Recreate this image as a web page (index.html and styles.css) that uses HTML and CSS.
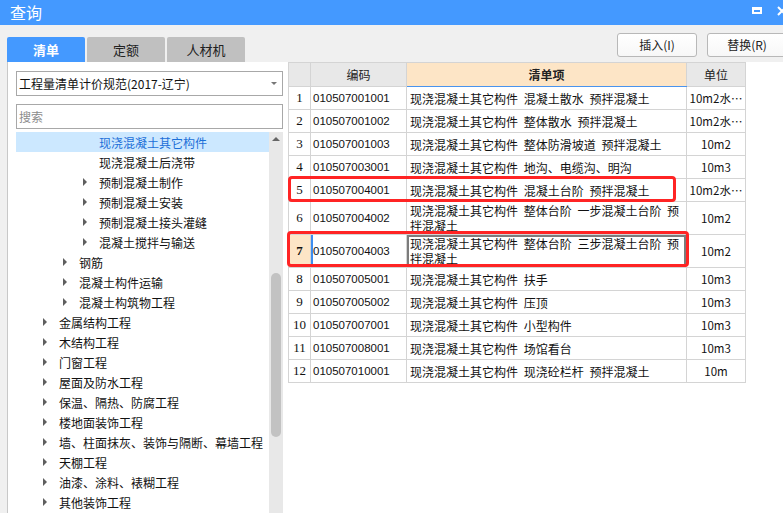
FILE: index.html
```html
<!DOCTYPE html>
<html lang="zh-CN">
<head>
<meta charset="utf-8">
<title>查询</title>
<link rel="stylesheet" href="styles.css">
</head>
<body>
<div class="titlebar">
  <span class="title">查询</span>
  <span class="winbtns">
    <span class="max"></span>
    <svg class="close" width="10" height="10" viewBox="0 0 10 10"><path d="M1 1L9 9M9 1L1 9" stroke="#fff" stroke-width="2"/></svg>
  </span>
</div>
<div class="toolbar">
  <div class="tabs">
    <div class="tab active">清单</div>
    <div class="tab">定额</div>
    <div class="tab">人材机</div>
  </div>
  <div class="actions">
    <div class="btn">插入(I)</div>
    <div class="btn">替换(R)</div>
  </div>
</div>
<div class="main">
  <div class="left">
    <div class="select">工程量清单计价规范(2017-辽宁)<span class="caret"></span></div>
    <div class="search">搜索</div>
    <div class="treewrap">
      <div class="tree">
        <div class="row l3 sel"><span class="noarrow"></span>现浇混凝土其它构件</div>
        <div class="row l3"><span class="noarrow"></span>现浇混凝土后浇带</div>
        <div class="row l3"><span class="arrow"></span>预制混凝土制作</div>
        <div class="row l3"><span class="arrow"></span>预制混凝土安装</div>
        <div class="row l3"><span class="arrow"></span>预制混凝土接头灌缝</div>
        <div class="row l3"><span class="arrow"></span>混凝土搅拌与输送</div>
        <div class="row l2"><span class="arrow"></span>钢筋</div>
        <div class="row l2"><span class="arrow"></span>混凝土构件运输</div>
        <div class="row l2"><span class="arrow"></span>混凝土构筑物工程</div>
        <div class="row l1"><span class="arrow"></span>金属结构工程</div>
        <div class="row l1"><span class="arrow"></span>木结构工程</div>
        <div class="row l1"><span class="arrow"></span>门窗工程</div>
        <div class="row l1"><span class="arrow"></span>屋面及防水工程</div>
        <div class="row l1"><span class="arrow"></span>保温、隔热、防腐工程</div>
        <div class="row l1"><span class="arrow"></span>楼地面装饰工程</div>
        <div class="row l1"><span class="arrow"></span>墙、柱面抹灰、装饰与隔断、幕墙工程</div>
        <div class="row l1"><span class="arrow"></span>天棚工程</div>
        <div class="row l1"><span class="arrow"></span>油漆、涂料、裱糊工程</div>
        <div class="row l1"><span class="arrow"></span>其他装饰工程</div>
      </div>
      <div class="scrollbar">
        <span class="up"></span>
        <div class="thumb"></div>
      </div>
    </div>
  </div>
  <div class="right">
    <table class="grid">
      <colgroup><col class="c-no"><col class="c-code"><col class="c-item"><col class="c-unit"></colgroup>
      <thead>
        <tr><th></th><th>编码</th><th class="item">清单项</th><th>单位</th></tr>
      </thead>
      <tbody>
        <tr><td class="no">1</td><td class="code">010507001001</td><td class="txt">现浇混凝土其它构件 混凝土散水 预拌混凝土</td><td class="unit">10m2水…</td></tr>
        <tr><td class="no">2</td><td class="code">010507001002</td><td class="txt">现浇混凝土其它构件 整体散水 预拌混凝土</td><td class="unit">10m2水…</td></tr>
        <tr><td class="no">3</td><td class="code">010507001003</td><td class="txt">现浇混凝土其它构件 整体防滑坡道 预拌混凝土</td><td class="unit">10m2</td></tr>
        <tr><td class="no">4</td><td class="code">010507003001</td><td class="txt">现浇混凝土其它构件 地沟、电缆沟、明沟</td><td class="unit">10m3</td></tr>
        <tr><td class="no">5</td><td class="code">010507004001</td><td class="txt">现浇混凝土其它构件 混凝土台阶 预拌混凝土</td><td class="unit">10m2水…</td></tr>
        <tr class="tall"><td class="no">6</td><td class="code">010507004002</td><td class="txt">现浇混凝土其它构件 整体台阶 一步混凝土台阶 预<br>拌混凝土</td><td class="unit">10m2</td></tr>
        <tr class="tall cur"><td class="no">7</td><td class="code">010507004003</td><td class="txt">现浇混凝土其它构件 整体台阶 三步混凝土台阶 预<br>拌混凝土</td><td class="unit">10m2</td></tr>
        <tr><td class="no">8</td><td class="code">010507005001</td><td class="txt">现浇混凝土其它构件 扶手</td><td class="unit">10m3</td></tr>
        <tr><td class="no">9</td><td class="code">010507005002</td><td class="txt">现浇混凝土其它构件 压顶</td><td class="unit">10m3</td></tr>
        <tr><td class="no">10</td><td class="code">010507007001</td><td class="txt">现浇混凝土其它构件 小型构件</td><td class="unit">10m3</td></tr>
        <tr><td class="no">11</td><td class="code">010507008001</td><td class="txt">现浇混凝土其它构件 场馆看台</td><td class="unit">10m3</td></tr>
        <tr><td class="no">12</td><td class="code">010507010001</td><td class="txt">现浇混凝土其它构件 现浇砼栏杆 预拌混凝土</td><td class="unit">10m</td></tr>
      </tbody>
    </table>
  </div>
  <div class="mark m5"></div>
  <div class="mark m7"></div>
</div>
</body>
</html>
```
FILE: styles.css
```css
* { box-sizing: border-box; margin: 0; padding: 0; }
html, body { width: 783px; height: 513px; overflow: hidden; }
body {
  background: #f0f0f0;
  font-family: "Noto Sans CJK SC", "Liberation Sans", sans-serif;
  font-size: 12px;
  color: #111;
}

/* title bar */
.titlebar {
  height: 25px;
  background: #4499ff;
  display: flex;
  padding-left: 10px;
  color: #fff;
}
.title { flex: 1; font-size: 16px; line-height: 24px; }
.winbtns {
  display: flex;
  align-items: flex-start;
  gap: 15px;
  margin-right: -4px;
  padding-top: 7px;
}
.max {
  width: 10px;
  height: 7px;
  border: 2px solid #fff;
  border-top-width: 3px;
}
.close { margin-top: -1px; }

/* toolbar */
.toolbar { height: 37px; display: flex; padding-left: 7px; }
.tabs { display: flex; gap: 2px; align-self: flex-end; }
.tab {
  width: 78px;
  height: 25px;
  background: #c0c0c0;
  border-radius: 2px 2px 0 0;
  text-align: center;
  line-height: 25px;
  font-size: 13px;
  color: #222;
}
.tab.active { background: #4499ff; color: #fff; font-weight: bold; }
.actions {
  margin-left: auto;
  margin-right: -4px;
  margin-top: 8px;
  display: flex;
  gap: 10px;
  align-self: flex-start;
}
.btn {
  width: 80px;
  height: 24px;
  border: 1px solid #b8b8b8;
  border-radius: 3px;
  background: linear-gradient(#ffffff, #f7f7f7);
  text-align: center;
  line-height: 22px;
  font-size: 12px;
  color: #222;
}

/* main */
.main { position: relative; display: flex; height: 451px; }
.left {
  margin-left: 7px;
  width: 282px;
  background: #fff;
  border-left: 1px solid #c8c8c8;
  padding: 9px 0 0 8px;
  display: flex;
  flex-direction: column;
}
.select, .search {
  width: 267px;
  height: 25px;
  border: 1px solid #a8a8a8;
  padding-left: 2px;
  display: flex;
  align-items: center;
  white-space: nowrap;
}
.select { color: #111; }
.caret {
  margin-left: auto;
  margin-right: 5px;
  width: 0;
  height: 0;
  border-top: 3px solid #777;
  border-left: 3px solid transparent;
  border-right: 3px solid transparent;
}
.search { margin-top: 8px; color: #8c8c8c; }

.treewrap { margin-top: 3px; display: flex; width: 267px; flex: 1; overflow: hidden; }
.tree { width: 253px; }
.row {
  height: 20px;
  display: flex;
  align-items: center;
  white-space: nowrap;
  color: #111;
}
.row.sel { background: #cce8ff; color: #1c6fd8; }
.l1 { padding-left: 27px; }
.l2 { padding-left: 47px; }
.l3 { padding-left: 67px; }
.arrow {
  width: 0;
  height: 0;
  border-left: 4px solid #5e5e5e;
  border-top: 4px solid transparent;
  border-bottom: 4px solid transparent;
  margin-right: 12px;
}
.noarrow { width: 4px; margin-right: 12px; }

.scrollbar {
  width: 14px;
  background: #e8e8e8;
  display: flex;
  flex-direction: column;
  align-items: center;
}
.up {
  margin-top: 5px;
  width: 0;
  height: 0;
  border-bottom: 4px solid #666;
  border-left: 4px solid transparent;
  border-right: 4px solid transparent;
}
.thumb {
  margin-top: 132px;
  width: 10px;
  height: 164px;
  border-radius: 5px;
  background: #c2c2c2;
}

/* grid */
.right { flex: 1; background: #fff; }
.grid {
  border-collapse: collapse;
  table-layout: fixed;
  width: 458px;
  margin-left: -1px;
}
.c-no { width: 22px; }
.c-code { width: 96px; }
.c-item { width: 280px; }
.c-unit { width: 59px; }
.grid th, .grid td {
  border: 1px solid #d4d4d4;
  height: 23px;
  padding: 0 3px;
  white-space: nowrap;
  overflow: hidden;
  vertical-align: middle;
}
.grid th {
  height: 24px;
  background: #e8e8e8;
  font-weight: normal;
  font-size: 12px;
  text-align: center;
  color: #222;
}
.grid th.item {
  background: #fde5c6;
  font-weight: bold;
  border-bottom: 1px solid #4a94ee;
}
.grid td.no { text-align: center; padding: 0; font-family: "Liberation Serif", serif; font-size: 13px; }
.grid td.code { font-family: "Liberation Sans", sans-serif; font-size: 11.5px; padding-left: 2px; }
.grid td.txt { word-spacing: 3px; line-height: 15px; }
.grid td.unit { text-align: center; font-size: 11.5px; padding: 0; }
.grid tr.tall td { height: 33px; }
.grid tr.cur td.no { background: #fde5c6; font-weight: bold; }
.grid tr.cur td.code { box-shadow: inset 2px 0 #3d8ef0; }
.grid tr.cur td.txt { box-shadow: inset 0 0 0 2px #7c7c7c; }

/* annotation boxes */
.mark {
  position: absolute;
  border: 3px solid #ff2424;
  border-radius: 4px;
}
.m5 { left: 288px; top: 114px; width: 388px; height: 26px; }
.m7 { left: 287px; top: 169px; width: 402px; height: 36px; }
```
